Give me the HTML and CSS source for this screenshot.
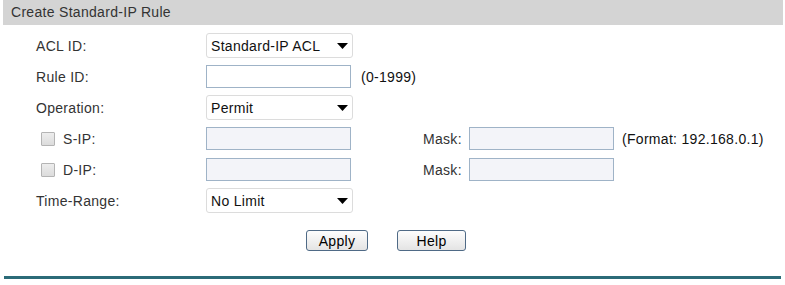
FILE: index.html
```html
<!DOCTYPE html>
<html lang="en">
<head>
    <meta charset="UTF-8">
    <title>Create Standard-IP Rule</title>
    <link rel="stylesheet" href="styles.css">
</head>
<body>
    <div class="panel-title">Create Standard-IP Rule</div>

    <form class="rule-form">
        <div class="row">
            <label class="label">ACL ID:</label>
            <div class="select-wrap">
                <select class="select">
                    <option>Standard-IP ACL</option>
                </select>
                <svg class="arrow" width="11" height="6" viewBox="0 0 11 6"><path d="M0 0H11L5.5 6Z" fill="#000"/></svg>
            </div>
        </div>

        <div class="row">
            <label class="label">Rule ID:</label>
            <input type="text" class="text white">
            <span class="hint">(0-1999)</span>
        </div>

        <div class="row">
            <label class="label">Operation:</label>
            <div class="select-wrap">
                <select class="select">
                    <option>Permit</option>
                </select>
                <svg class="arrow" width="11" height="6" viewBox="0 0 11 6"><path d="M0 0H11L5.5 6Z" fill="#000"/></svg>
            </div>
        </div>

        <div class="row">
            <label class="label check-label"><input type="checkbox" class="check"> S-IP:</label>
            <input type="text" class="text">
            <span class="mask">Mask:</span>
            <input type="text" class="text">
            <span class="format">(Format: 192.168.0.1)</span>
        </div>

        <div class="row">
            <label class="label check-label"><input type="checkbox" class="check"> D-IP:</label>
            <input type="text" class="text">
            <span class="mask">Mask:</span>
            <input type="text" class="text">
        </div>

        <div class="row">
            <label class="label">Time-Range:</label>
            <div class="select-wrap">
                <select class="select">
                    <option>No Limit</option>
                </select>
                <svg class="arrow" width="11" height="6" viewBox="0 0 11 6"><path d="M0 0H11L5.5 6Z" fill="#000"/></svg>
            </div>
        </div>

        <div class="buttons">
            <button type="button" class="btn apply">Apply</button>
            <button type="button" class="btn help">Help</button>
        </div>
    </form>

    <div class="bottom-line"></div>
</body>
</html>
```

FILE: styles.css
```css
/* Basic Reset */
* {
    margin: 0;
    padding: 0;
    box-sizing: border-box;
    font-family: "Liberation Sans", Arial, sans-serif;
}

body {
    background: #fff;
    color: #333;
    font-size: 14px;
    letter-spacing: 0.3px;
}

.panel-title {
    margin: 0 2px 0 3px;
    height: 25px;
    line-height: 25px;
    padding-left: 8px;
    background: #d4d4d4;
    color: #333;
}

.rule-form {
    padding-top: 5px;
}

.row {
    display: flex;
    align-items: center;
    height: 31px;
    padding-left: 36px;
}

.label {
    width: 170px;
    display: flex;
    align-items: center;
}

.check-label {
    margin-left: 5px;
    width: 165px;
}

.check {
    appearance: none;
    width: 14px;
    height: 14px;
    margin-right: 8px;
    border: 1px solid #b4b4b4;
    border-radius: 1px;
    background: linear-gradient(#ededed, #dcdcdc);
}

.select-wrap {
    position: relative;
    width: 147px;
    height: 25px;
}

.select {
    appearance: none;
    width: 100%;
    height: 100%;
    padding: 0 4px;
    border: 1px solid #dcdcdc;
    border-radius: 3px;
    background: #fff;
    color: #111;
    font-size: 14px;
    letter-spacing: 0.3px;
    outline: none;
}

.arrow {
    position: absolute;
    right: 5px;
    top: 10px;
    pointer-events: none;
}

.text {
    width: 145px;
    height: 23px;
    border: 1px solid #9fb3c7;
    background: #f3f4f9;
    outline: none;
}

.text.white {
    background: #fff;
}

.hint {
    margin-left: 10px;
    color: #111;
}

.mask {
    margin-left: 72px;
    width: 46px;
}

.format {
    margin-left: 8px;
    color: #111;
}

.buttons {
    display: flex;
    gap: 29px;
    margin-top: 14px;
    padding-left: 306px;
}

.btn {
    height: 21px;
    border: 1px solid #4f6a86;
    border-radius: 3px;
    background: linear-gradient(#fdfdfd, #e4e4e4);
    color: #000;
    font-size: 14px;
    letter-spacing: 0.3px;
    cursor: pointer;
}

.apply {
    width: 62px;
}

.help {
    width: 69px;
}

.bottom-line {
    margin: 25px 4px 0 4px;
    height: 3px;
    background: #2b6b78;
}
```
